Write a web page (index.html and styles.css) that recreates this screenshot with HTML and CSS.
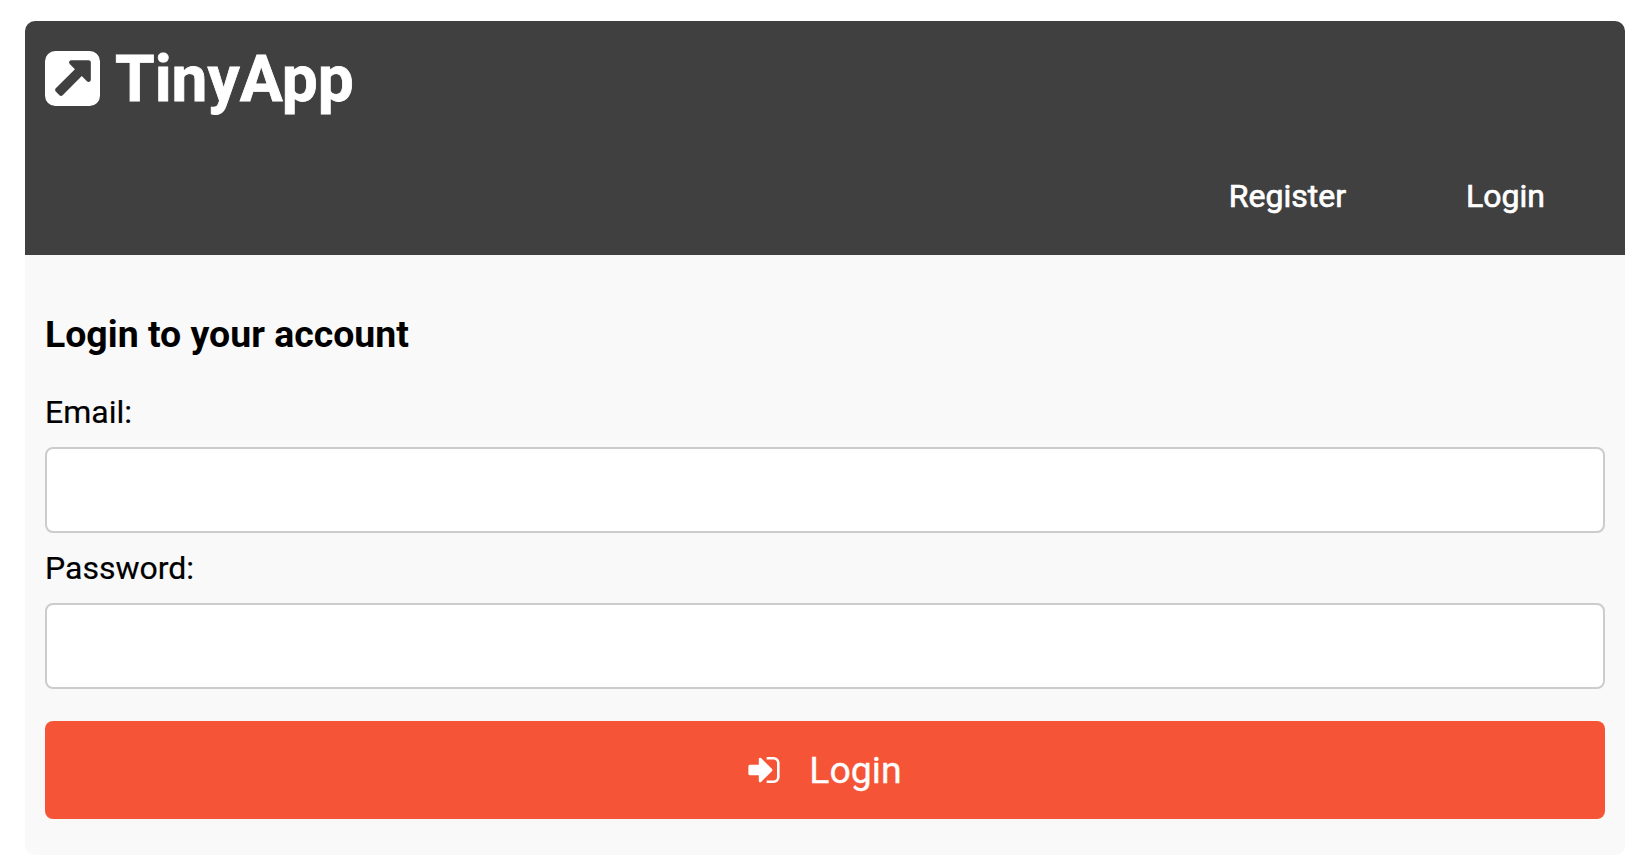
FILE: index.html
```html
<!DOCTYPE html>
<html lang="en">
<head>
<meta charset="utf-8">
<title>TinyApp</title>
<link rel="stylesheet" href="styles.css">
</head>
<body>
<div class="card">
  <header class="header">
    <h1 class="brand">
      <svg class="brand-icon" viewBox="128 128 1536 1536" aria-hidden="true"><path fill="currentColor" d="M1408 928v-480q0-26-19-45t-45-19h-480q-42 0-59 39-17 41 14 70l144 144-534 534q-19 19-19 45t19 45l102 102q19 19 45 19t45-19l534-534 144 144q18 19 45 19 12 0 25-5 39-17 39-59zm256-512v960q0 119-84.5 203.5t-203.5 84.5h-960q-119 0-203.5-84.5t-84.5-203.5v-960q0-119 84.5-203.5t203.5-84.5h960q119 0 203.5 84.5t84.5 203.5z"/></svg>
      <span class="brand-name">TinyApp</span>
    </h1>
    <nav class="nav">
      <a class="nav-link" href="#">Register</a>
      <a class="nav-link" href="#">Login</a>
    </nav>
  </header>
  <form class="form">
    <h3 class="title">Login to your account</h3>
    <label class="label" for="email">Email:</label>
    <input class="input" id="email" type="email">
    <label class="label" for="password">Password:</label>
    <input class="input" id="password" type="password">
    <button class="submit" type="button">
      <svg class="submit-icon" viewBox="128 256 1536 1280" aria-hidden="true"><path fill="currentColor" d="M1312 896q0 26-19 45l-544 544q-19 19-45 19t-45-19-19-45v-288h-448q-26 0-45-19t-19-45v-384q0-26 19-45t45-19h448v-288q0-26 19-45t45-19 45 19l544 544q19 19 19 45zm352-352v704q0 119-84.5 203.5t-203.5 84.5h-320q-13 0-22.5-9.5t-9.5-22.5q0-4-1-20t-.5-26.5 3-23.5 10-19.5 20.5-6.5h320q66 0 113-47t47-113v-704q0-66-47-113t-113-47h-312l-11.5-1-11.5-3-8-5.5-7-9-2-13.5q0-4-1-20t-.5-26.5 3-23.5 10-19.5 20.5-6.5h320q119 0 203.5 84.5t84.5 203.5z"/></svg>
      <span>Login</span>
    </button>
  </form>
</div>
</body>
</html>
```
FILE: styles.css
```css
* { box-sizing: border-box; }
body {
  margin: 0;
  padding: 21px 14px 12px 25px;
  background: #fff;
  color: #000;
  font-family: Roboto, "Liberation Sans", sans-serif;
  font-size: 32px;
  line-height: 38px;
}
.card {
  height: 834px;
  border-radius: 10px;
  background: #f9f9f9;
  overflow: hidden;
}
.header {
  height: 234px;
  padding: 20px;
  background: #404040;
  color: #fff;
}
.brand {
  display: flex;
  align-items: center;
  gap: 15px;
  height: 75px;
  margin: 0;
  font-size: 64px;
  font-weight: 700;
  line-height: 75px;
}
.brand-icon { width: 55px; height: 55px; }
.brand-name {
  padding-top: 2px;
  -webkit-text-stroke: 0.8px currentColor;
}
.nav {
  display: flex;
  justify-content: flex-end;
  margin-top: 61px;
}
.nav-link {
  padding: 0 60px;
  color: inherit;
  font-weight: 400;
  text-decoration: none;
  -webkit-text-stroke: 0.7px currentColor;
}
.form {
  display: flex;
  flex-direction: column;
  padding: 57px 20px 36px;
}
.title {
  margin: 0 0 37px;
  font-size: 37.44px;
  font-weight: 700;
  line-height: 44px;
}
.label {
  margin-bottom: 16px;
  -webkit-text-stroke: 0.2px currentColor;
}
.input {
  height: 86px;
  margin: 0 0 16px;
  padding: 20px;
  border: 2px solid #ccc;
  border-radius: 8px;
  background: #fff;
  font: inherit;
}
.submit {
  display: flex;
  align-items: center;
  justify-content: center;
  gap: 29px;
  height: 98px;
  margin-top: 16px;
  padding: 0;
  border: 0;
  border-radius: 8px;
  background: #f55536;
  color: #fff;
  font: 400 37.44px/44px Roboto, "Liberation Sans", sans-serif;
  -webkit-text-stroke: 0.3px currentColor;
}
.submit-icon { width: 32px; height: 26px; }
```
